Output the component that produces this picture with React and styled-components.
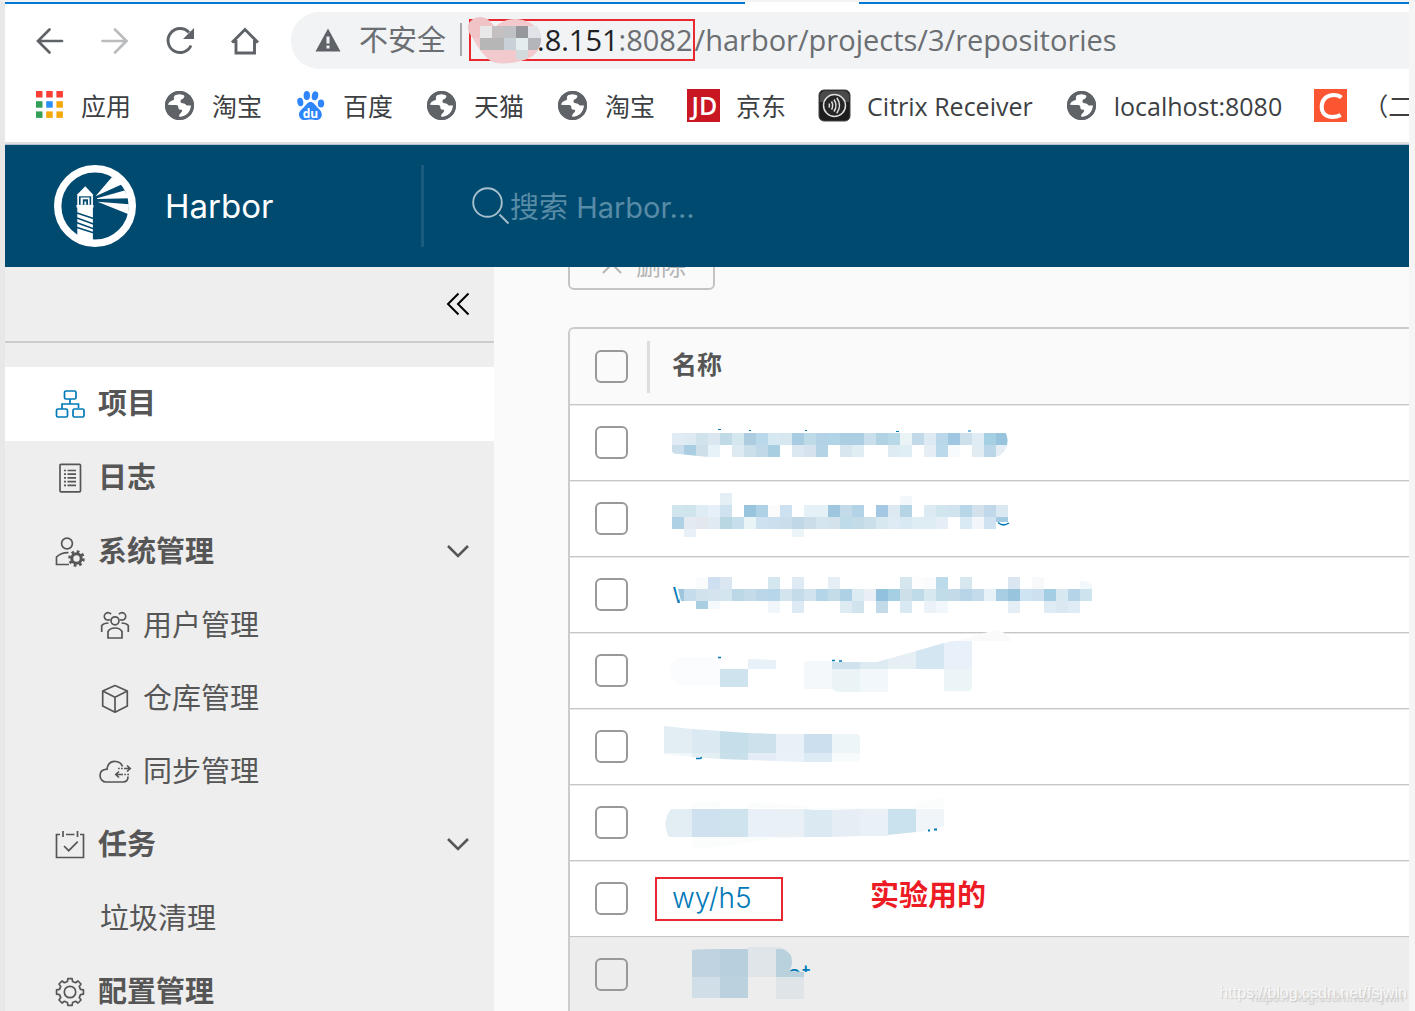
import { useState } from "react";
import styled, { createGlobalStyle } from "styled-components";

const GlobalStyle = createGlobalStyle`
  * {
    box-sizing: border-box;
  }
  body {
    margin: 0;
    background: #f5f5f5;
    font-family: Inter, "Noto Sans CJK SC", sans-serif;
    color: #565656;
  }
  button {
    padding: 0;
    border: none;
    background: none;
    font: inherit;
    color: inherit;
    cursor: pointer;
  }
  a {
    color: inherit;
    text-decoration: none;
  }
`;

const Page = styled.div`
  position: relative;
  display: flex;
  flex-direction: column;
  height: 100vh;
  padding-right: 6px;
  border-top: 2px solid #f3f3f3;
  border-left: 5px solid #e8e8e8;
  overflow: hidden;
`;

/* ---------- browser ---------- */

const Browser = styled.div`
  flex: none;
  background: #fff;
  border-bottom: 2px solid #e0e0e2;
  font-family: "Open Sans", "Noto Sans CJK SC", sans-serif;
`;

const TabStrip = styled.div`
  display: flex;
  justify-content: center;
  height: 2px;
  padding-left: 190px;
  background: #0078d7;
`;

const ActiveTab = styled.div`
  width: 114px;
  background: #fff;
`;

const Toolbar = styled.div`
  display: flex;
  align-items: center;
  padding: 8px 0 0 12px;
`;

const ToolButton = styled.button`
  display: flex;
  justify-content: center;
  width: 65px;
  color: ${(props) => (props.$muted ? "#babcbe" : "#5f6368")};
`;

const Omnibox = styled.div`
  display: flex;
  flex: 1;
  align-items: center;
  height: 57px;
  margin-left: 14px;
  padding: 0 0 2px 24px;
  border-radius: 28px 0 0 28px;
  background: #f1f3f4;
  color: #6b6e72;
  font-size: 29px;
  line-height: 40px;
  white-space: nowrap;
  overflow: hidden;
`;

const Insecure = styled.span`
  margin-left: 18px;
  padding-right: 14px;
`;

const OmniDivider = styled.span`
  width: 2px;
  height: 33px;
  margin-right: 7px;
  background: #a6a8ab;
`;

const Host = styled.span`
  display: flex;
  align-items: center;
  height: 42px;
  border: 2px solid #e8272e;
  strong {
    font-weight: 400;
    color: #202124;
  }
`;

const Bookmarks = styled.nav`
  display: flex;
  align-items: center;
  gap: 32px;
  height: 73px;
  padding-left: 27px;
  overflow: hidden;
`;

const Bookmark = styled.a`
  display: flex;
  flex: none;
  align-items: center;
  gap: 16px;
  font-size: 25px;
  line-height: 36px;
  color: #3c4043;
  white-space: nowrap;
`;

/* ---------- harbor ---------- */

const Header = styled.header`
  display: flex;
  flex: none;
  align-items: center;
  height: 123px;
  border-top: 1px solid #b4c3cf;
  background: #004a70;
  color: #fff;
`;

const Brand = styled.a`
  display: flex;
  align-items: center;
  gap: 29px;
  width: 416px;
  padding-left: 49px;
  font-size: 33px;
  line-height: 40px;
`;

const Search = styled.label`
  display: flex;
  flex: 1;
  align-items: center;
  height: 82px;
  padding-left: 48px;
  border-left: 3px solid #1a5c7e;
`;

const SearchInput = styled.input`
  flex: 1;
  padding: 3px 0 0;
  border: none;
  outline: none;
  background: transparent;
  color: #fff;
  font: inherit;
  font-size: 29px;
  &::placeholder {
    color: #588ba5;
    opacity: 1;
  }
`;

const Body = styled.div`
  display: flex;
  flex: 1;
  min-height: 0;
`;

const Sidebar = styled.aside`
  flex: none;
  width: 489px;
  background: #eee;
  overflow: hidden;
`;

const CollapseBar = styled.div`
  display: flex;
  align-items: center;
  justify-content: flex-end;
  height: 76px;
  margin-bottom: 24px;
  padding-right: 24px;
  border-bottom: 2px solid #ccc;
  color: #000;
`;

const CollapseButton = styled.button`
  display: flex;
`;

const NavItem = styled.a`
  display: flex;
  align-items: center;
  gap: 13px;
  height: ${(props) => (props.$sub ? 73 : 74)}px;
  padding: 0 24px 0 ${(props) => (props.$sub ? 95 : 50)}px;
  background: ${(props) => (props.$active ? "#fff" : "transparent")};
  font-size: 29px;
  font-weight: ${(props) => (props.$sub ? 400 : 700)};
  line-height: 40px;
  svg:first-child {
    flex: none;
    overflow: visible;
    color: ${(props) => (props.$active ? "#0079b8" : "#565656")};
  }
`;

const NavText = styled.span`
  flex: 1;
`;

const Main = styled.main`
  display: flex;
  flex: 1;
  flex-direction: column;
  min-width: 0;
  padding-left: 74px;
  background: #fafafa;
  overflow: hidden;
`;

/* the action bar is scrolled half way under the header */
const ActionBar = styled.div`
  display: flex;
  flex: none;
  align-items: flex-end;
  height: 23px;
  margin-bottom: 37px;
  overflow: hidden;
`;

const DeleteButton = styled.button`
  display: flex;
  flex: none;
  align-items: center;
  gap: 14px;
  height: 49px;
  padding: 0 27px 3px 32px;
  border: 2px solid #c4c4c4;
  border-radius: 6px;
  color: #b4b4b4;
  font-size: 25px;
  font-weight: 400;
`;

const Grid = styled.table`
  width: 100%;
  border-spacing: 0;
  border: 2px solid #ccc;
  border-right: none;
  border-bottom: none;
  border-radius: 6px 0 0 0;
`;

const HeadCell = styled.th`
  height: 75px;
  padding: 0;
  text-align: left;
  font-size: 25px;
  font-weight: 700;
`;

const HeadLabel = styled.div`
  height: 52px;
  padding-left: 22px;
  border-left: 3px solid #ddd;
  line-height: 48px;
`;

const Cell = styled.td`
  height: 76px;
  padding: 0;
  border-top: 1px solid #c6c6c6;
  box-shadow: inset 0 1px #e9e9e9;
  background: ${(props) => (props.$hover ? "#ededed" : "#fff")};
`;

const CheckSlot = styled.div`
  display: flex;
  width: 77px;
  padding-left: 25px;
`;

const Checkbox = styled.input`
  appearance: none;
  width: 33px;
  height: 33px;
  margin: 0;
  border: 2px solid #999;
  border-radius: 6px;
  &:checked {
    background: #0079b8;
    border-color: #0079b8;
  }
`;

const NameSlot = styled.div`
  display: flex;
  align-items: flex-start;
  gap: 87px;
  padding-left: 8px;
`;

const RepoLink = styled.a`
  width: 128px;
  height: 44px;
  padding-left: 15px;
  border: 2px solid #e8272e;
  color: #0079b8;
  font-size: 28px;
  font-weight: 300;
  line-height: 38px;
`;

const Note = styled.strong`
  color: #ed1c24;
  font-size: 29px;
  line-height: 38px;
`;

const Masked = styled.svg`
  display: block;
  overflow: visible;
`;

const Watermark = styled.div`
  position: absolute;
  right: ${(props) => (props.$small ? 12 : 8)}px;
  bottom: ${(props) => (props.$small ? 4 : 8)}px;
  color: ${(props) => (props.$small ? "#e6e6e6" : "#f8f8f8")};
  font-family: "Liberation Sans", sans-serif;
  font-size: ${(props) => (props.$small ? 13 : 16)}px;
  line-height: 20px;
  text-shadow: 1px 1px 1px #c8c8c8;
`;

/* ---------- icons ---------- */

const Globe = () => (
  <svg width="33" height="33" viewBox="0 0 33 33">
    <circle cx="16.5" cy="16.5" r="14.5" fill="#5f6368" />
    <path
      d="M17 5.2c-1.400 0-3.500.3-4.500.9-1.500 1-2 2.400-1.500 3.500.5 1-.5 1.600-1.800 2-2 .6-3.800 2.200-4.300 4.200 2.800.2 5.500.1 8 .3 2.300.2 2.500 1.500 2.500 3 0 1.300 1 1.600 2.200 1.600h1.300c.7 1.300-.3 2.500-1.400 3.500-1 .9-1.500 2-1.500 3.400 6.500.6 12-4.600 12-11.100h-3.700c-1.300 0-1.500-1.200-2.500-1.800-1.200-.7-3.200-.2-4-1.300-.9-1.300 0-3.100 1.600-3.300 1.300-.2 1.300-1.600 2-2.500.5-.7-.6-2-4.400-2.400z"
      fill="#fff"
    />
    <circle cx="16.5" cy="16.5" r="13" fill="none" stroke="#5f6368" strokeWidth="3" />
  </svg>
);

const APP_COLORS = ["#f93e36", "#f93e36", "#f93e36", "#34a057", "#2a8ff7", "#f4a90b", "#34a057", "#f4a90b", "#f4a90b"];

const Apps = () => (
  <svg width="33" height="33" viewBox="0 0 33 33">
    {APP_COLORS.map((fill, i) => (
      <rect key={i} x={4 + (i % 3) * 10.2} y={2 + Math.floor(i / 3) * 10.2} width="6.500" height="6.500" fill={fill} />
    ))}
  </svg>
);

const Baidu = () => (
  <svg width="33" height="33" viewBox="0 0 33 33" fill="#2f86fc">
    <ellipse cx="12.800" cy="6.500" rx="3.200" ry="4.500" />
    <ellipse cx="21" cy="6.800" rx="3.200" ry="4.500" transform="rotate(12 21 6.800)" />
    <ellipse cx="6.300" cy="13" rx="3" ry="4.200" transform="rotate(-10 6.300 13)" />
    <ellipse cx="27" cy="14.500" rx="3.200" ry="4" />
    <path d="M16.500 13c3 0 4.500 2.700 6.500 5 2.200 2.400 4.800 4 4.800 7.500 0 3.300-2.300 5.500-5.300 5.500-2 0-3.800-.6-6-.6s-3.800.6-5.800.6C7.500 31 5 28.700 5 25.400c0-3.400 3-5.200 5.200-7.400 2-2.300 3.300-5 6.300-5z" />
    <text x="16.500" y="28.500" textAnchor="middle" fill="#fff" fontFamily="Open Sans" fontWeight="700" fontSize="12">
      du
    </text>
  </svg>
);

const JD = () => (
  <svg width="33" height="33" viewBox="0 0 33 33">
    <rect width="33" height="33" fill="#c91623" />
    <text x="17.500" y="26" textAnchor="middle" fill="#fff" fontFamily="Open Sans" fontWeight="600" fontSize="25">
      JD
    </text>
  </svg>
);

const Citrix = () => (
  <svg width="33" height="33" viewBox="0 0 33 33" fill="none" stroke="#ddd" strokeWidth="1.500">
    <rect x="1" y="1" width="31" height="31" rx="5" fill="#1d1d1d" stroke="#444" strokeWidth="1" />
    <path d="M2 7a5 5 0 0 1 5-5h19a5 5 0 0 1 5 5v6H2z" fill="#4a4a4a" stroke="none" />
    <circle cx="16.500" cy="16.500" r="11" fill="#262626" />
    <path d="M11 14.500q1 2 0 4M13.500 12.500q2.400 4 0 8M16 10.500q4 6 0 12M18.800 8.800q5.500 7.700 0 15.400" />
  </svg>
);

const Csdn = () => (
  <svg width="33" height="33" viewBox="0 0 33 33">
    <rect width="33" height="33" fill="#fc5531" />
    <path d="M27.500 8.500c-2-1.800-4.500-2.500-8-2.500-6.500 0-11.500 4.500-11.800 11-.3 7 4 11 10.500 11 3.200 0 6-.5 8.500-2" fill="none" stroke="#fff" strokeWidth="4" />
  </svg>
);

const HarborLogo = () => (
  <svg width="82" height="82" viewBox="0 0 82 82" fill="#fff">
    <circle cx="41" cy="41" r="37.300" fill="none" stroke="#fff" strokeWidth="7.400" />
    <path d="M41.500 31.300 58 12l7 3 2.500 4.500zM43 33.200l27.500-7.800 5 7.800-32.500.8zM43.500 36.800l31.500 2.400-1 9.800z" />
    <path d="M31.300 21.300 39.500 30h-.6v10h.6v2.600h-.6V78H30l-6.700-6V42.600h-.8V40h.8V30h-.6z" />
    <path d="M25 31.300h12.200v8.500H25z" fill="#004a70" />
    <path d="M26.600 32.500h9v7.300h-9z" />
    <path d="M28.800 34.300h5.200v5.500h-5.200z" fill="#004a70" />
    <path d="M30.400 36.500h1.800v3.300h-1.800z" />
    <path d="M23 48l16.500 5.500M23 53l16.500 6M23 57.800l16.500 6M23 62.500l16.500 5.300" stroke="#004a70" strokeWidth="1.500" />
  </svg>
);

const lineIcon = { fill: "none", stroke: "currentColor", strokeWidth: 1.7 };

const ProjectsIcon = () => (
  <svg width="30" height="30" viewBox="0 0 30 30" {...lineIcon}>
    <rect x="9.500" y="2" width="11.500" height="8" rx="1.500" />
    <rect x="1.500" y="20" width="11" height="8" rx="1.500" />
    <rect x="18" y="20" width="11" height="8" rx="1.500" />
    <path d="M15 10v5M7 20v-5h16.500v4" />
  </svg>
);

const LogsIcon = () => (
  <svg width="30" height="30" viewBox="0 0 30 30" {...lineIcon}>
    <rect x="5" y="1.300" width="20.500" height="27.500" rx="1" />
    <path d="M9 7.500h2M9 11.200h2M9 14.900h2M9 18.600h2M9 22.300h2M12.500 7.500H21M12.500 11.200H21M12.500 14.900H21M12.500 18.600H21M12.500 22.300H21" />
  </svg>
);

const AdminIcon = () => (
  <svg width="30" height="30" viewBox="0 0 30 30" {...lineIcon}>
    <circle cx="12" cy="6.500" r="5.400" />
    <path d="M13.500 15.600C8.500 15.400 4.500 17 1.500 20v7.500H14" />
    <circle cx="21.500" cy="21.500" r="4.700" strokeWidth="3" />
    <circle cx="21.500" cy="21.500" r="7" strokeWidth="2.600" strokeDasharray="2.750 2.750" />
  </svg>
);

const UsersIcon = () => (
  <svg width="30" height="30" viewBox="0 0 30 30" {...lineIcon}>
    <circle cx="15" cy="9.800" r="4" />
    <path d="M8 27v-6.500c2.500-4.700 11.500-4.700 14 0V27zM10 8.500A3.700 3.700 0 1 1 11 3.200M8.500 12C5.500 12 3 13 1.700 14.500V21M20 8.500a3.700 3.700 0 1 0-1-5.300M21.500 12c3 0 5.500 1 6.800 2.500V21" />
  </svg>
);

const CubeIcon = () => (
  <svg width="30" height="30" viewBox="0 0 30 30" {...lineIcon} strokeLinejoin="round">
    <path d="M15 1.500 27.300 7v15L15 28.200 2.700 22V7zM2.700 7 15 13.200 27.300 7M15 13.200v15" />
  </svg>
);

const SyncIcon = () => (
  <svg width="30" height="30" viewBox="1 0 30 30" {...lineIcon}>
    <path d="M23.500 9.500C21.500 3.500 12 2.500 9 8.500c-.6 1.300-.9 2.400-.9 3.700C3.500 12.500 1 15 1 18.500S3.800 25 7 25h17c2.800 0 5-1.800 5-5.500" />
    <path d="M19 11.500h1.700M22 11.500h1.700M25 11.500h5.500M28 8.500l3.200 3-3.200 3M30 17.500h-1.700M27 17.500h-1.700M24 17.500h-6.500M20 14.500l-3.200 3 3.200 3" />
  </svg>
);

const TasksIcon = () => (
  <svg width="30" height="30" viewBox="0 0 30 30" {...lineIcon}>
    <path d="M5 4.500H1.500v23h27v-23H25M11 4.500h8.500M8 1v6M22.500 1v6M9 16l4.700 4.700 9-9" />
  </svg>
);

const gearPath = () => {
  const points = [];
  for (let i = 0; i < 8; i++) {
    [[-14, 10.8], [-9, 13.6], [9, 13.6], [14, 10.8]].forEach(([offset, r]) => {
      const angle = ((i * 45 + offset) * Math.PI) / 180;
      points.push(`${(15 + r * Math.sin(angle)).toFixed(2)} ${(15 - r * Math.cos(angle)).toFixed(2)}`);
    });
  }
  return `M${points.join("L")}z`;
};

const GearIcon = () => (
  <svg width="30" height="30" viewBox="0 0 30 30" {...lineIcon} strokeLinejoin="round">
    <path d={gearPath()} />
    <circle cx="15" cy="15" r="5.700" />
  </svg>
);

const Caret = ({ open }) => (
  <svg width="24" height="24" viewBox="0 0 24 24" fill="none" stroke="currentColor" strokeWidth="2.600">
    <path d={open ? "M2 6l10 10 10-10" : "M6.500 2l10 10-10 10"} />
  </svg>
);

/* ---------- pixelated names ---------- */

const Pixels = ({ y, cells, height = 12 }) =>
  cells
    .split(" ")
    .map((c, i) => (c === "-" ? null : <rect key={i} x={672 + i * 12} y={y} width="12" height={height} fill={`#${c}`} />));

const Mask = ({ top, children }) => (
  <Masked width="450" height="73" viewBox={`647 ${top} 450 73`}>
    {children}
  </Masked>
);

const MaskOne = () => (
  <Mask top={406}>
    <clipPath id="mask-one">
      <path d="M672 425h320a14 16 0 0 1 3 32H708l-34-3.500-2-2z" />
    </clipPath>
    <g clipPath="url(#mask-one)">
      <Pixels y={433} cells="e0ebf3 deeaf2 d0e2ec dbe7f0 c0dae6 d4e6ee aecce0 b9d8ea d6e8f1 d6e7ef a8cde2 bddae7 b4d2e5 b1d5e7 abcee2 abcee2 c9dfeb b0d2e3 b7d9e7 eaf3f6 c1d9e8 deeaf3 bad8ea 9fc7e1 cddfea e0ecf4 a5cfe2 97c3dc" />
      <Pixels y={445} cells="c9deea a9cde1 cfdfe9 e6f2f8 - deeaf1 cadfea bfd9e8 a8cee2 - dbe8f2 d6e3ee b4d4e6 - d8e6f0 e0edf3 - - deebf3 dfedf5 - e5edf5 bad9ea f8fbfd - e0ebf2 bbd6e6 e5eef5" />
    </g>
    <path d="M718 429.500h3M749 430.500h2M805 430.500h2M896 431.500h3M968 431h3" stroke="#0079b8" />
  </Mask>
);

const MaskTwo = () => (
  <Mask top={482}>
    <Pixels y={493} cells="- - - - e3eef5" />
    <Pixels y={496} height={9} cells="- - - - - - - - - - - - - - - - - - - f2f7fb" />
    <Pixels y={505} cells="d1e5ee d0e4ed deecf5 e7f0f8 cee2f0 - 98c4dd afd1e6 fbfbfc cee1f0 - e4f1f6 e4f1f6 9ec6df c3dbe9 b3d3e7 - a4c8e3 dce9f3 b5d5e6 - dceaf4 d0e5ed d0e3ee b7d6e8 d3e1ed c0d8e9 dae8f2" />
    <Pixels y={517} cells="afd1e5 e3eaf1 e3e8ef dfeaf3 b9d6e3 c5e0ec e9f4f7 cee1f1 cbdfee c9ddeb bfd7e6 cadde9 d5e5ef d4e2ec bddbe8 c3dbe7 cbdfea d8e8f1 deebf5 d9e9f3 deecf4 deecf3 e5eef6 - daeaf4 f2f6fb cee2f1" />
    <Pixels y={517} height={5} cells="- - - - - - - - - - - - - - - - - - - - - - - - - - - a3cce2" />
    <Pixels y={529} height={8} cells="- e9f1f8 - - - - - - - - ecf4f7" />
    <path d="M998 522.500q5 4.500 11 .5" fill="none" stroke="#0079b8" strokeWidth="1.500" />
  </Mask>
);

const MaskThree = () => (
  <Mask top={558}>
    <clipPath id="mask-three">
      <path d="M672 586h5l3 17h-8z" />
    </clipPath>
    <text x="672" y="603" fill="#0079b8" fontSize="28" fontWeight="300" clipPath="url(#mask-three)">
      w
    </text>
    <Pixels y={577} cells="- - f9fbfd cddff0 dae7f3 - - - d4e6ef - deebf5 - - e7eff6 - - - - - d5e6ee fdfdfd f9fbfd bbdaea - d6e7ef - - - dae7f2 - f7f9fb" />
    <path d="M678 589h6v12h-3z" fill="#9fc6de" />
    <path d="M1080 581q8 0 12 4v4h-12z" fill="#f3f8fc" />
    <Pixels y={589} cells="- c4dcec d1e2ec d4e3ed d3e5ee bcd7e6 c4dbe9 bad6e8 b7d6e9 d3e4ee c4dcea d0e3ee b4d4e8 c4dce8 afd1e5 dcebf1 e9eff4 91c1dd a5cfe2 cde0ea bfdbe9 d7e8f0 bfdce8 c3dae8 b7d5e7 c3dbea e6f1f8 a7cee3 98c4dd cfe4f2 cce0ef a2cde3 d7e8f0 b6d4e8 cde4ee" />
    <Pixels y={601} height={8} cells="- - a9cee2 f4f9fd" />
    <Pixels y={601} cells="- - - - - - - - f0f6fa - deeaf3 - - - dfebf2 d1e4ee - c3dbe9 - d9e9f3 - ebf3f8 f1f7fb - - - - - e5edf5 - - dfecf6 dbe8f1 dfecf6" />
  </Mask>
);

const MaskFour = () => (
  <Mask top={634}>
    <path d="M954 641l34-9q14-6 24 9z" fill="#fafafa" />
    <path d="M684 657h36v28h-36a14 14 0 0 1 0-28z" fill="#fbfcfd" />
    <path d="M720 669h28v18h-28z" fill="#cfe3ee" />
    <path d="M748 659l28 1v9h-28z" fill="#e7f1f7" />
    <path d="M804 661h28v28h-28z" fill="#f4f8fb" />
    <path d="M832 662h28v7h-28z" fill="#cfe2ed" />
    <path d="M860 662h17l11-3v10h-28z" fill="#dcebf1" />
    <path d="M888 659l28-8v18h-28z" fill="#e5eff4" />
    <path d="M916 651l28-8v26h-28z" fill="#d3e6f1" />
    <path d="M944 643l8-2h20v28h-28z" fill="#e8f1f9" />
    <path d="M832 669h28v23h-20q-6 0-8-4z" fill="#eaf4f7" />
    <path d="M860 669h28v23h-28z" fill="#f2f7fb" />
    <path d="M944 669h28v18q0 4-5 4h-23z" fill="#ebf5f8" />
    <path d="M718 657.500h3M832 660.500h3M839 661h3" stroke="#0079b8" strokeWidth="1.500" />
  </Mask>
);

const MaskFive = () => (
  <Mask top={710}>
    <path d="M664 726l28 3v24h-28z" fill="#e2eef4" />
    <path d="M692 729l28 2v22h-28z" fill="#dbe9f3" />
    <path d="M720 731l28 2v20h-28z" fill="#c4deea" />
    <path d="M748 733l28 1v19h-28z" fill="#cce1ec" />
    <path d="M776 734h28v19h-28z" fill="#e8f0f8" />
    <path d="M804 734h28v19h-28z" fill="#cbdfef" />
    <path d="M832 734h24q4 0 4 4v15h-28z" fill="#ecf5f8" />
    <path d="M664 753h28v4l-28-3z" fill="#f2f7fb" />
    <path d="M692 753h28v6l-28-2z" fill="#e4eff4" />
    <path d="M720 753h28v7l-28-1z" fill="#c9e0ea" />
    <path d="M748 753h28v8l-28-1z" fill="#e4edf5" />
    <path d="M776 753h28v9l-28-1z" fill="#eaf1f8" />
    <path d="M804 753h28v9h-28z" fill="#dceaf3" />
    <path d="M832 753h28v5q0 4-4 4h-24z" fill="#f7fbfc" />
    <path d="M696 758.500h4l2-1" fill="none" stroke="#0079b8" strokeWidth="1.500" />
  </Mask>
);

const MaskSix = () => (
  <Mask top={786}>
    <path d="M692 803l28-2v8h28v-6q40 0 62 4l5 3h101v-8l28-4v10H692zM692 837h120l-50 3q-40 8-70 8z" fill="#fbfcfc" />
    <path d="M671 809h21v28h-23q-8-14 2-28z" fill="#e2eef4" />
    <path d="M692 809h28v28h-28z" fill="#cfe1ee" />
    <path d="M720 809h28v28h-28z" fill="#cee3ed" />
    <path d="M748 809h28v28h-28z" fill="#e9f0f7" />
    <path d="M776 809h28v28h-28z" fill="#e9f1f7" />
    <path d="M804 809l10 1h18v27h-28z" fill="#dbe9f3" />
    <path d="M832 810l28-1v27l-28 1z" fill="#e6edf5" />
    <path d="M860 809h28v27h-28z" fill="#e9f0f6" />
    <path d="M888 809h28v23l-28 3z" fill="#c9e2ed" />
    <path d="M916 809h28v17q-12 5-28 6z" fill="#f0f5f9" />
    <path d="M928 830.500h2M934 829.500h3" stroke="#0079b8" strokeWidth="2" />
  </Mask>
);

const MaskSeven = () => (
  <Mask top={938}>
    <clipPath id="mask-seven">
      <path d="M780 950h40v22h-40z" />
    </clipPath>
    <text x="786" y="985" fill="#0079b8" fontSize="28" fontWeight="300" clipPath="url(#mask-seven)">
      et
    </text>
    <path d="M692 950q10-1 28-1v28h-28z" fill="#bfd4e0" />
    <path d="M720 949h28v28h-28z" fill="#b8cfdd" />
    <path d="M748 947h33l6 3-11 27h-28z" fill="#e0e5e9" />
    <path d="M776 949h6q10 3 10 12 0 7-3 10l15 1v5h-28z" fill="#b9d0dd" />
    <path d="M692 977h28v21h-28z" fill="#d0dfe7" />
    <path d="M720 977h28v21h-28z" fill="#bbd1de" />
    <path d="M776 977h28v22h-28z" fill="#dfe4e9" />
  </Mask>
);

const HostMask = () => (
  <Masked width="66" height="38" viewBox="471 20 66 38">
    <path d="M495 26q10-9 22-8 22 2 24 22-2 16-20 20-24 6-33-2-14-14-20-32 6-12 27 0z" fill="#f2c9cc" />
    <path d="M468 24q4-8 12-8 8 0 14 9l-14 12h-7q-6-6-5-13z" fill="#f0c4c7" />
    <path d="M480 25h12v12h-12z" fill="#e8e8e8" />
    <path d="M492 25h12v12h-12z" fill="#c4bfc0" />
    <path d="M504 25h12v12h-12z" fill="#bfc1c4" />
    <path d="M516 25h12v12h-12z" fill="#96979c" />
    <path d="M528 25h9q4 6 4 12h-13z" fill="#e1e3e8" />
    <path d="M480 37h12v12h-12zM492 37h12v12h-12z" fill="#b6b6b7" />
    <path d="M504 37h12v12h-12z" fill="#c8d0d8" />
    <path d="M516 37h12v12h-12z" fill="#e5ecee" />
    <path d="M528 37h13q0 8-4 12h-9z" fill="#b4b5ba" />
    <path d="M516 49h12v8q-8 3-12 1z" fill="#d3dadc" />
  </Masked>
);

/* ---------- data ---------- */

const BOOKMARKS = [
  { icon: <Apps />, text: "应用" },
  { icon: <Globe />, text: "淘宝" },
  { icon: <Baidu />, text: "百度" },
  { icon: <Globe />, text: "天猫" },
  { icon: <Globe />, text: "淘宝" },
  { icon: <JD />, text: "京东" },
  { icon: <Citrix />, text: "Citrix Receiver" },
  { icon: <Globe />, text: "localhost:8080" },
  { icon: <Csdn />, text: "（二" },
];

const NAV = [
  { text: "项目", icon: <ProjectsIcon />, active: true },
  { text: "日志", icon: <LogsIcon /> },
  {
    text: "系统管理",
    icon: <AdminIcon />,
    children: [
      { text: "用户管理", icon: <UsersIcon /> },
      { text: "仓库管理", icon: <CubeIcon /> },
      { text: "同步管理", icon: <SyncIcon /> },
    ],
  },
  { text: "任务", icon: <TasksIcon />, children: [{ text: "垃圾清理" }] },
  { text: "配置管理", icon: <GearIcon /> },
];

const ROWS = [
  { id: 1, name: <MaskOne /> },
  { id: 2, name: <MaskTwo /> },
  { id: 3, name: <MaskThree /> },
  { id: 4, name: <MaskFour /> },
  { id: 5, name: <MaskFive /> },
  { id: 6, name: <MaskSix /> },
  { id: 7, repo: "wy/h5", note: "实验用的" },
  { id: 8, name: <MaskSeven />, hover: true },
];

function BrowserBar() {
  return (
    <Browser>
      <TabStrip>
        <ActiveTab />
      </TabStrip>
      <Toolbar>
        <ToolButton aria-label="后退">
          <svg width="30" height="30" viewBox="0 0 30 30" fill="none" stroke="currentColor" strokeWidth="2.700" strokeLinecap="round">
            <path d="M27 15H3.500M14.500 3.500 3 15l11.500 11.500" />
          </svg>
        </ToolButton>
        <ToolButton aria-label="前进" $muted>
          <svg width="30" height="30" viewBox="0 0 30 30" fill="none" stroke="currentColor" strokeWidth="2.700" strokeLinecap="round">
            <path d="M2.500 15H26M15 3.500 26.500 15 15 26.500" />
          </svg>
        </ToolButton>
        <ToolButton aria-label="刷新">
          <svg width="30" height="30" viewBox="0 0 30 30" fill="none" stroke="currentColor" strokeWidth="2.900">
            <path d="M26 19.500A12 12 0 1 1 24 6.500" />
            <path d="M29 2v11H18z" fill="currentColor" stroke="none" />
          </svg>
        </ToolButton>
        <ToolButton aria-label="主页">
          <svg width="30" height="30" viewBox="0 0 30 30" fill="none" stroke="currentColor" strokeWidth="2.900">
            <path d="M2 16.500 15 3.500l13 13M6 14v13h18.500V14M3 15.500h3M24.500 15.500h3" />
          </svg>
        </ToolButton>
        <Omnibox>
          <svg width="26" height="24" viewBox="0 0 26 24">
            <path d="M13 .5 25.500 23.500H.5z" fill="#5f6368" />
            <path d="M11.500 8.500h3v7h-3zM11.500 17.500h3v3h-3z" fill="#f1f3f4" />
          </svg>
          <Insecure>不安全</Insecure>
          <OmniDivider />
          <Host>
            <HostMask />
            <strong>.8.151</strong>:8082
          </Host>
          /harbor/projects/3/repositories
        </Omnibox>
      </Toolbar>
      <Bookmarks>
        {BOOKMARKS.map((item, i) => (
          <Bookmark key={i} href="#">
            {item.icon}
            {item.text}
          </Bookmark>
        ))}
      </Bookmarks>
    </Browser>
  );
}

function SideNav() {
  const [closed, setClosed] = useState([]);
  const toggle = (text) =>
    setClosed((list) => (list.includes(text) ? list.filter((t) => t !== text) : [...list, text]));

  return (
    <Sidebar>
      <CollapseBar>
        <CollapseButton aria-label="收起">
          <svg width="24" height="24" viewBox="0 0 24 24" fill="none" stroke="currentColor" strokeWidth="2">
            <path d="M12.500 1.500 2 12l10.500 10.500M22.500 1.500 12 12l10.500 10.500" />
          </svg>
        </CollapseButton>
      </CollapseBar>
      <nav>
        {NAV.map((item) => (
          <div key={item.text}>
            <NavItem
              href="#"
              $active={item.active}
              onClick={item.children ? () => toggle(item.text) : undefined}
            >
              {item.icon}
              <NavText>{item.text}</NavText>
              {item.children && <Caret open={!closed.includes(item.text)} />}
            </NavItem>
            {item.children &&
              !closed.includes(item.text) &&
              item.children.map((sub) => (
                <NavItem key={sub.text} href="#" $sub>
                  {sub.icon}
                  <NavText>{sub.text}</NavText>
                </NavItem>
              ))}
          </div>
        ))}
      </nav>
    </Sidebar>
  );
}

function Repositories() {
  return (
    <Main>
      <ActionBar>
        <DeleteButton>
          <svg width="20" height="20" viewBox="0 0 20 20" fill="none" stroke="currentColor" strokeWidth="2">
            <path d="M1 1l18 18M19 1 1 19" />
          </svg>
          删除
        </DeleteButton>
      </ActionBar>
      <Grid>
        <thead>
          <tr>
            <HeadCell>
              <CheckSlot>
                <Checkbox type="checkbox" aria-label="全选" />
              </CheckSlot>
            </HeadCell>
            <HeadCell width="100%">
              <HeadLabel>名称</HeadLabel>
            </HeadCell>
          </tr>
        </thead>
        <tbody>
          {ROWS.map((row) => (
            <tr key={row.id}>
              <Cell $hover={row.hover}>
                <CheckSlot>
                  <Checkbox type="checkbox" aria-label={`选择 ${row.id}`} />
                </CheckSlot>
              </Cell>
              <Cell $hover={row.hover}>
                {row.name || (
                  <NameSlot>
                    <RepoLink href="#">{row.repo}</RepoLink>
                    <Note>{row.note}</Note>
                  </NameSlot>
                )}
              </Cell>
            </tr>
          ))}
        </tbody>
      </Grid>
    </Main>
  );
}

export default function App() {
  return (
    <Page>
      <GlobalStyle />
      <BrowserBar />
      <Header>
        <Brand href="#">
          <HarborLogo />
          Harbor
        </Brand>
        <Search>
          <svg width="38" height="40" viewBox="0 0 38 40" fill="none" stroke="#a6bfcc" strokeWidth="1.900">
            <circle cx="15.500" cy="16.500" r="14.300" />
            <path d="M27.500 28.500l9 9" />
          </svg>
          <SearchInput type="text" aria-label="搜索" placeholder="搜索 Harbor..." />
        </Search>
      </Header>
      <Body>
        <SideNav />
        <Repositories />
      </Body>
      <Watermark $small aria-hidden="true">https://blog.csdn.net/fsjwin</Watermark>
      <Watermark>https://blog.csdn.net/fsjwin</Watermark>
    </Page>
  );
}
